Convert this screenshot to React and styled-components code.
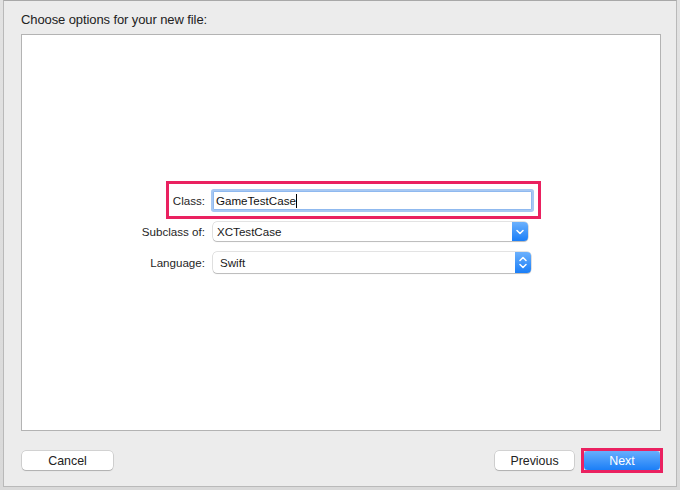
import React from "react";
import styled, { createGlobalStyle } from "styled-components";

const GlobalStyle = createGlobalStyle`
  html, body {
    margin: 0;
    padding: 0;
    background: #cfcfcf;
  }
  body {
    font-family: "Liberation Sans", Arial, sans-serif;
    font-size: 13px;
    color: #1e1e1e;
  }
`;

const Desktop = styled.div`
  width: 680px;
  height: 490px;
  overflow: hidden;
  display: flex;
  background: linear-gradient(#e2e2e2, #d9d9d9);
`;

const Sheet = styled.div`
  box-sizing: border-box;
  width: 674px;
  height: 487px;
  margin-left: 3px;
  background: #ececec;
  border: 1px solid #b9b9b9;
  border-top-color: #a8a8a8;
  display: flex;
  flex-direction: column;
  padding: 0 15px 0 17px;
`;

const Title = styled.div`
  height: 33px;
  box-sizing: border-box;
  padding-top: 11px;
  line-height: 15px;
  letter-spacing: -0.1px;
  color: #222;
`;

const Panel = styled.div`
  box-sizing: border-box;
  height: 397px;
  background: #fff;
  border: 1px solid #b3b3b3;
  padding-top: 155px;
`;

const Form = styled.div`
  display: flex;
  flex-direction: column;
  gap: 10px;
  font-size: 11.6px;
`;

const Row = styled.div`
  position: relative;
  display: flex;
  align-items: center;
  gap: 8px;
  height: 21px;
`;

const Label = styled.div`
  width: 183px;
  text-align: right;
  color: #262626;
`;

const Highlight = styled.div`
  position: absolute;
  box-sizing: border-box;
  left: ${(p) => p.$left}px;
  top: ${(p) => p.$top}px;
  width: ${(p) => p.$w}px;
  height: ${(p) => p.$h}px;
  border: 3px solid #ea2160;
  pointer-events: none;
`;

const TextField = styled.div`
  box-sizing: border-box;
  width: 319px;
  height: 19px;
  border: 1px solid #8fb9ef;
  box-shadow: 0 0 0 2px #a7c8f3;
  border-radius: 1px;
  background: #fff;
  display: flex;
  align-items: center;
  padding-left: 2px;
  color: #111;
`;

const Caret = styled.span`
  display: inline-block;
  width: 1px;
  height: 14px;
  background: #000;
`;

const Popup = styled.div`
  box-sizing: border-box;
  width: ${(p) => p.$w}px;
  height: ${(p) => p.$h}px;
  border-radius: 4px;
  background: #fff;
  box-shadow: 0 0 0 0.5px rgba(0, 0, 0, 0.22), 0 1px 1px rgba(0, 0, 0, 0.18);
  display: flex;
  align-items: center;
  justify-content: space-between;
  padding-left: ${(p) => p.$pad}px;
  color: #1a1a1a;
`;

const Arrow = styled.div`
  width: 16px;
  height: 100%;
  border-radius: 0 4px 4px 0;
  background: linear-gradient(#6cb1fd, #1a7ef7);
  display: flex;
  align-items: center;
  justify-content: center;
`;

const Footer = styled.div`
  display: flex;
  justify-content: space-between;
  align-items: center;
  padding: 20px 1px 0 1px;
  font-size: 12.4px;
`;

const Group = styled.div`
  display: flex;
  gap: 10px;
`;

const Button = styled.div`
  position: relative;
  box-sizing: border-box;
  width: ${(p) => p.$w}px;
  height: 19px;
  border-radius: 4px;
  display: flex;
  align-items: center;
  justify-content: center;
  background: ${(p) => (p.$primary ? "linear-gradient(#67aefd, #1b7ff7)" : "#fff")};
  color: ${(p) => (p.$primary ? "#fff" : "#222")};
  box-shadow: ${(p) =>
    p.$primary
      ? "0 0 0 0.5px rgba(0, 70, 200, 0.4)"
      : "0 0 0 0.5px rgba(0, 0, 0, 0.22), 0 1px 1px rgba(0, 0, 0, 0.16)"};
`;

function ChevronDown() {
  return (
    <svg width="8" height="6" viewBox="0 0 8 6">
      <path d="M1 1.5 L4 4.5 L7 1.5" fill="none" stroke="#fff" strokeWidth="1.5" strokeLinecap="round" strokeLinejoin="round" />
    </svg>
  );
}

function ChevronUpDown() {
  return (
    <svg width="8" height="13" viewBox="0 0 8 13">
      <path d="M1 4.5 L4 1.5 L7 4.5" fill="none" stroke="#fff" strokeWidth="1.5" strokeLinecap="round" strokeLinejoin="round" />
      <path d="M1 8.5 L4 11.5 L7 8.5" fill="none" stroke="#fff" strokeWidth="1.5" strokeLinecap="round" strokeLinejoin="round" />
    </svg>
  );
}

export default function App() {
  return (
    <>
      <GlobalStyle />
      <Desktop>
        <Sheet>
          <Title>Choose options for your new file:</Title>
          <Panel>
            <Form>
              <Row>
                <Label>Class:</Label>
                <TextField>
                  GameTestCase
                  <Caret />
                </TextField>
                <Highlight $left={144} $top={-9} $w={375} $h={38} />
              </Row>
              <Row>
                <Label>Subclass of:</Label>
                <Popup $w={315} $h={19} $pad={4}>
                  XCTestCase
                  <Arrow>
                    <ChevronDown />
                  </Arrow>
                </Popup>
              </Row>
              <Row>
                <Label>Language:</Label>
                <Popup $w={318} $h={21} $pad={7}>
                  Swift
                  <Arrow>
                    <ChevronUpDown />
                  </Arrow>
                </Popup>
              </Row>
            </Form>
          </Panel>
          <Footer>
            <Button $w={91}>Cancel</Button>
            <Group>
              <Button $w={79}>Previous</Button>
              <Button $w={76} $primary>
                Next
                <Highlight $left={-3} $top={-3} $w={82} $h={25} />
              </Button>
            </Group>
          </Footer>
        </Sheet>
      </Desktop>
    </>
  );
}
